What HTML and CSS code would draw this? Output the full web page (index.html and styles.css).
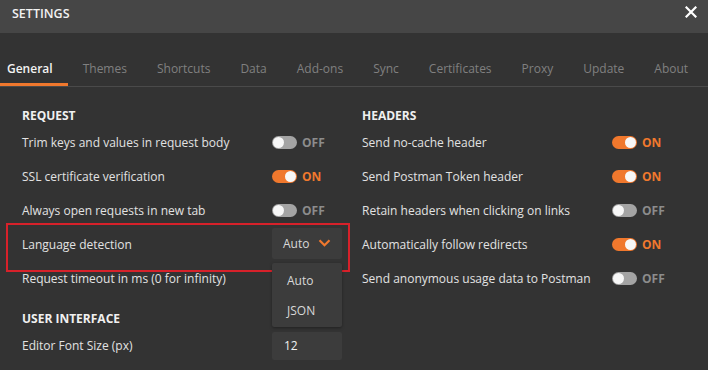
FILE: index.html
```html
<!DOCTYPE html>
<html>
<head>
<meta charset="utf-8">
<link rel="stylesheet" href="styles.css">
</head>
<body>
<div class="titlebar">
  <span class="title">SETTINGS</span>
  <svg class="close" width="12" height="12" viewBox="0 0 12 12"><path d="M1.5 1.5L10.5 10.5M10.5 1.5L1.5 10.5" stroke="#ffffff" stroke-width="2.2" stroke-linecap="square"/></svg>
</div>
<div class="tabs">
  <div class="tab active">General</div>
  <div class="tab">Themes</div>
  <div class="tab">Shortcuts</div>
  <div class="tab">Data</div>
  <div class="tab">Add-ons</div>
  <div class="tab">Sync</div>
  <div class="tab">Certificates</div>
  <div class="tab">Proxy</div>
  <div class="tab">Update</div>
  <div class="tab">About</div>
</div>
<div class="content">
  <div class="col">
    <div class="heading">REQUEST</div>
    <div class="row"><span class="label">Trim keys and values in request body</span><span class="switch"><span class="track off"></span><span class="state off">OFF</span></span></div>
    <div class="row"><span class="label">SSL certificate verification</span><span class="switch"><span class="track on"></span><span class="state on">ON</span></span></div>
    <div class="row"><span class="label">Always open requests in new tab</span><span class="switch"><span class="track off"></span><span class="state off">OFF</span></span></div>
    <div class="row"><span class="label">Language detection</span>
      <span class="select-wrap">
        <span class="select"><span>Auto</span><svg width="13" height="8" viewBox="0 0 13 8"><path d="M1.5 1.3L6.5 6.2L11.5 1.3" fill="none" stroke="#f0782d" stroke-width="2.2"/></svg></span>
        <span class="menu"><span class="item">Auto</span><span class="item">JSON</span></span>
      </span>
    </div>
    <div class="row"><span class="label">Request timeout in ms (0 for infinity)</span></div>
    <div class="heading ui">USER INTERFACE</div>
    <div class="row"><span class="label">Editor Font Size (px)</span><span class="input">12</span></div>
  </div>
  <div class="col">
    <div class="heading">HEADERS</div>
    <div class="row"><span class="label">Send no-cache header</span><span class="switch"><span class="track on"></span><span class="state on">ON</span></span></div>
    <div class="row"><span class="label">Send Postman Token header</span><span class="switch"><span class="track on"></span><span class="state on">ON</span></span></div>
    <div class="row"><span class="label">Retain headers when clicking on links</span><span class="switch"><span class="track off"></span><span class="state off">OFF</span></span></div>
    <div class="row"><span class="label">Automatically follow redirects</span><span class="switch"><span class="track on"></span><span class="state on">ON</span></span></div>
    <div class="row"><span class="label">Send anonymous usage data to Postman</span><span class="switch"><span class="track off"></span><span class="state off">OFF</span></span></div>
  </div>
</div>
<div class="highlight"></div>
</body>
</html>
```
FILE: styles.css
```css
* { box-sizing: border-box; }
html, body { margin: 0; padding: 0; }
body {
  width: 708px;
  height: 370px;
  overflow: hidden;
  background: #333333;
  font-family: "Open Sans", "Noto Sans", sans-serif;
  font-size: 12px;
  color: #e2e2e2;
  position: relative;
}
.titlebar {
  height: 33px;
  background: #464646;
  display: flex;
  justify-content: space-between;
  align-items: flex-start;
  padding: 5px 11px 0 12px;
}
.title {
  font-size: 12.5px;
  font-weight: 600;
  color: #f2f2f2;
  line-height: 17px;
}
.close { margin-top: 1px; }
.tabs {
  display: flex;
  height: 54px;
  border-bottom: 1px solid #4a4a4a;
}
.tab {
  flex: none;
  white-space: nowrap;
  padding: 27px 15px 5px;
  line-height: 18px;
  font-size: 12px;
  color: #808080;
  border-bottom: 3px solid transparent;
  height: 53px;
}
.tab:first-child { padding-left: 7px; }
.tab.active {
  color: #f2f2f2;
  font-weight: 600;
  border-bottom-color: #f0782d;
}
.content {
  display: grid;
  grid-template-columns: 340px 1fr;
  padding: 19px 0 0 22px;
}
.heading {
  font-weight: 700;
  color: #f0f0f0;
  line-height: 19px;
}
.heading.ui { margin-top: 14px; }
.row {
  display: flex;
  align-items: center;
  height: 34px;
}
.label { width: 250px; flex: none; }
.switch { display: flex; align-items: center; gap: 5px; }
.track {
  width: 25px;
  height: 13px;
  border-radius: 7px;
  position: relative;
  background: #a4a4a4;
}
.track::after {
  content: "";
  position: absolute;
  top: 1px;
  left: 1px;
  width: 11px;
  height: 11px;
  border-radius: 50%;
  background: #f7f7f7;
}
.track.on { background: #f0782d; }
.track.on::after { left: 13px; }
.state { font-weight: 700; font-size: 12px; }
.state.off { color: #8c8c8c; }
.state.on { color: #f0782d; }
.select-wrap { position: relative; margin-top: -2px; }
.select {
  display: flex;
  align-items: center;
  justify-content: space-between;
  width: 70px;
  height: 31px;
  padding: 0 11px 0 11px;
  background: #3c3c3c;
  border-radius: 2px;
  color: #d8d8d8;
}
.menu {
  position: absolute;
  left: 0;
  top: 35px;
  width: 70px;
  height: 64px;
  background: #3c3c3c;
  border-radius: 2px;
  box-shadow: 0 1px 3px rgba(0,0,0,0.35);
  display: flex;
  flex-direction: column;
  padding-top: 3px;
  z-index: 2;
}
.item {
  line-height: 30px;
  padding-left: 15px;
  color: #d8d8d8;
}
.input {
  width: 70px;
  height: 28px;
  margin-top: 2px;
  background: #3c3c3c;
  border-radius: 2px;
  padding-left: 12px;
  line-height: 28px;
  color: #f0f0f0;
}
.highlight {
  position: absolute;
  left: 6px;
  top: 223px;
  width: 344px;
  height: 49px;
  border: 2px solid #d7212a;
  pointer-events: none;
}
```
